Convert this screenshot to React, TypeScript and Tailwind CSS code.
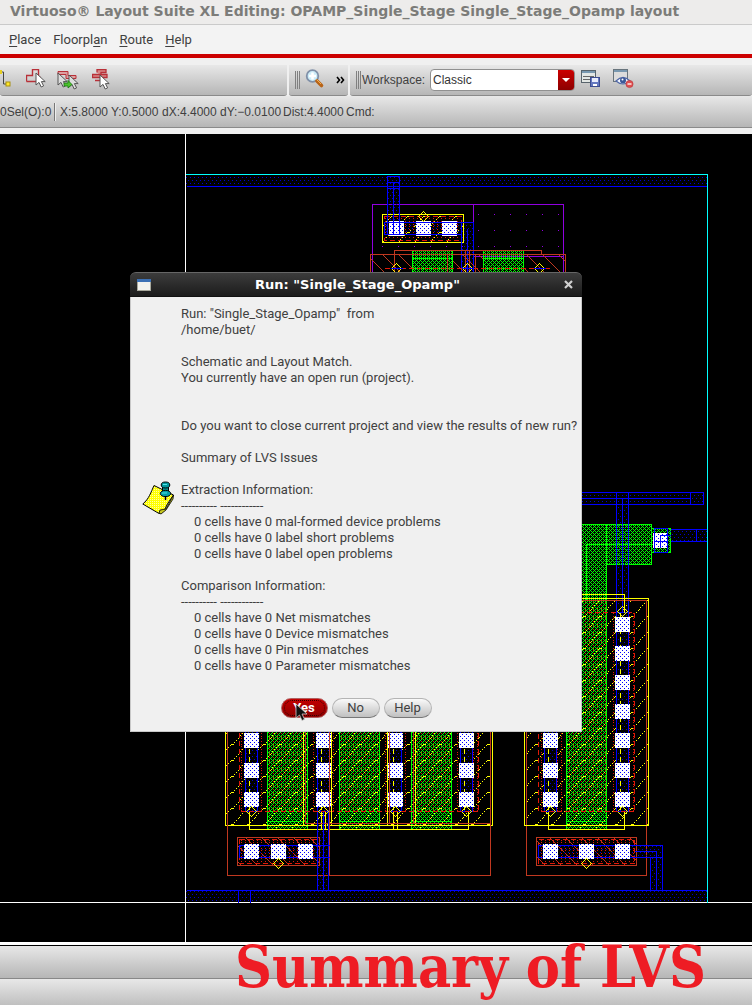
import type { ReactNode } from "react";

const CURSOR = "M0 0V12L3 9.4L5.2 14L7.6 12.9L5.4 8.6H9.2Z";

function Cursor({ x, y, fill = "#fff", stroke = "#555" }: { x: number; y: number; fill?: string; stroke?: string }) {
  return <path d={CURSOR} transform={`translate(${x} ${y})`} fill={fill} stroke={stroke} strokeWidth="1" />;
}

function IconButton({ label, className, width, children }: { label: string; className: string; width: number; children: ReactNode }) {
  return (
    <button type="button" aria-label={label} className={`block shrink-0 ${className}`}>
      <svg width={width} height="22" viewBox={`0 0 ${width} 22`} aria-hidden="true">
        {children}
      </svg>
    </button>
  );
}

function Grip() {
  return (
    <span aria-hidden="true" className="flex h-[18px] shrink-0 gap-px">
      <i className="w-px bg-[#808080]" />
      <i className="w-px bg-[#808080]" />
      <i className="w-px bg-[#808080]" />
    </span>
  );
}

function MenuItem({ before = "", mnemonic, after }: { before?: string; mnemonic: string; after: string }) {
  return (
    <button type="button">
      {before}
      <u className="underline-offset-2">{mnemonic}</u>
      {after}
    </button>
  );
}

function Toolbar() {
  const segment =
    "flex h-[31px] items-center rounded-b-[3px] border-b border-[#8a8a8a] bg-linear-to-b from-[#e8e8e8] to-[#b6b6b6]";
  return (
    <div className="flex gap-[2px] bg-[#f0f0f0] pt-[7px]">
      <div className={`${segment} w-[287px] shrink-0`}>
        <IconButton label="Create wire" className="mr-[15px]" width={11}>
          <path d="M0 3H3.500V15H7" fill="none" stroke="#444" />
          <rect x="0" y="1" width="2" height="4" fill="#e8d020" />
          <rect x="6" y="13" width="4" height="4" fill="#ffe82a" stroke="#a89010" />
        </IconButton>
        <IconButton label="Select shape" className="mr-[10px]" width={21}>
          <path d="M0.500 12.500V6.500H6.500V0.500H12.500V8.500H15M0.500 12.500H10" fill="none" stroke="#b83038" strokeWidth="1.400" />
          <Cursor x={10} y={4} />
        </IconButton>
        <IconButton label="Extend selection" className="mr-[12px]" width={23}>
          <path d="M1 2.500H11V6.500H19V9.500H9V5.500H1Z" fill="#dca0a0" stroke="#b83038" />
          <Cursor x={1} y={4} fill="#ddd" />
          <Cursor x={12} y={6} fill="#ddd" />
          <path d="M7 14H11V11.500L15 15.500L11 19V17H7Z" fill="#4cc22c" stroke="#187810" strokeWidth="0.800" />
        </IconButton>
        <IconButton label="Select by net" className="" width={22}>
          <path d="M5 3.500V0.500H14V3.500H9V6.500M0.500 5.500H15V8.500H0.500ZM3 11.500H9" fill="#d88888" stroke="#b83038" strokeWidth="1.300" />
          <Cursor x={8} y={6} />
        </IconButton>
      </div>
      <div className={`${segment} w-[59px] shrink-0 pl-[6px]`}>
        <Grip />
        <IconButton label="Zoom" className="ml-[5px]" width={20}>
          <circle cx="7.500" cy="7" r="5.800" fill="#ccecf8" stroke="#8090a8" strokeWidth="1.800" />
          <path d="M7.500 3.500V10.500M4 7H11" stroke="#fff" strokeWidth="2.500" />
          <path d="M12 12L16.500 16.500" stroke="#b86418" strokeWidth="3.600" strokeLinecap="round" />
          <path d="M11.500 10.500L16 15" stroke="#f8b050" />
        </IconButton>
        <button type="button" aria-label="More tools" className="ml-[11px]">
          <svg width="9" height="8" viewBox="0 0 9 8" fill="none" stroke="#000" strokeWidth="1.600" aria-hidden="true">
            <path d="M1 1L3.500 4L1 7M5 1L7.500 4L5 7" />
          </svg>
        </button>
      </div>
      <div className={`${segment} flex-1 pl-[6px]`}>
        <Grip />
        <label htmlFor="workspace" className="ml-px w-[68px] shrink-0">
          Workspace:
        </label>
        <div className="grid h-[22px] w-[145px] shrink-0">
          <select
            id="workspace"
            defaultValue="Classic"
            className="col-start-1 row-start-1 appearance-none rounded-[4px] border border-[#909090] bg-white pl-[2px] text-[#333]"
          >
            <option>Classic</option>
            <option>Basic</option>
          </select>
          <span
            aria-hidden="true"
            className="pointer-events-none col-start-1 row-start-1 my-px mr-px flex w-4 items-center justify-center justify-self-end rounded-r-[3px] bg-linear-to-b from-[#cc0000] to-[#8c0000]"
          >
            <svg width="8" height="4" viewBox="0 0 8 4">
              <path d="M0 0H8L4 4Z" fill="#fff" />
            </svg>
          </span>
        </div>
        <IconButton label="Save workspace" className="ml-[6px]" width={20}>
          <rect x="0.500" y="1.500" width="14" height="12" fill="#e2e6e4" stroke="#58646c" />
          <rect x="1" y="2" width="13" height="2" fill="#7898b0" />
          <path d="M2 7.500H13M2 10.500H9" stroke="#666" />
          <rect x="9.500" y="8.500" width="9" height="9" fill="#6478c0" stroke="#3c4c90" />
          <rect x="11" y="9" width="6" height="4" fill="#e8ecfc" />
          <rect x="12" y="15" width="4" height="2" fill="#fff" />
        </IconButton>
        <IconButton label="Hide workspace" className="ml-[12px]" width={22}>
          <rect x="0.500" y="0.500" width="14" height="12" fill="#dcdcdc" stroke="#68747c" />
          <rect x="1" y="1" width="13" height="2" fill="#7898b0" />
          <path d="M3 12Q10 5 17 12Q10 18 3 12Z" fill="#f4f8ff" stroke="#5068a8" strokeWidth="1.200" />
          <circle cx="10" cy="11.500" r="3" fill="#3c5898" />
          <circle cx="9.500" cy="10.500" r="1" fill="#fff" />
          <circle cx="16.500" cy="15" r="3.600" fill="#e05050" stroke="#b83038" strokeWidth="0.600" />
          <path d="M14.500 15H18.500" stroke="#fff" strokeWidth="1.300" />
        </IconButton>
      </div>
    </div>
  );
}

function StatusBar() {
  return (
    <div className="flex h-[32px] items-center border-b border-[#8a8a8a] bg-linear-to-b from-[#e8e8e8] to-[#b6b6b6] whitespace-nowrap">
      <span className="w-[54px] shrink-0">0Sel(O):0</span>
      <i aria-hidden="true" className="mr-1 h-[18px] w-[2px] shrink-0 border-l border-[#777] bg-[#eee]" />
      <span className="w-[51px] shrink-0">X:5.8000</span>
      <span className="w-[51px] shrink-0">Y:0.5000</span>
      <span className="w-[58px] shrink-0">dX:4.4000</span>
      <span className="w-[63px] shrink-0">dY:−0.0100</span>
      <span className="w-[63px] shrink-0">Dist:4.4000</span>
      <span>Cmd:</span>
    </div>
  );
}

/* ---------- Layout drawing ---------- */

function box(x1: number, y1: number, x2: number, y2: number) {
  return `M${x1} ${y1}H${x2}V${y2}H${x1}Z`;
}

/* Outlines are shifted by half a pixel; fills are shifted back onto the pixel grid. */
const ON_GRID = "translate(-0.5 -0.5)";

function Fill({ b, p }: { b: [number, number, number, number]; p: string }) {
  return <rect x={b[0]} y={b[1]} width={b[2] - b[0]} height={b[3] - b[1]} fill={`url(#${p})`} transform={ON_GRID} />;
}

function Contact({ x, y }: { x: number; y: number }) {
  return (
    <g transform={ON_GRID}>
      <rect x={x} y={y} width="15" height="15" fill="#fff" />
      <rect x={x} y={y} width="15" height="15" fill="url(#contact)" />
    </g>
  );
}

function Pin({ x, y }: { x: number; y: number }) {
  return <path d={`M${x} ${y - 5}L${x + 5} ${y}L${x} ${y + 5}L${x - 5} ${y}Z`} stroke="#ffff00" />;
}

const ROWS_LOW = [733, 763, 792];
const ROWS_ALL = [617, 646, 675, 704, 733, 763, 792];

function ContactColumn({ x, rows, top }: { x: number; rows: number[]; top: number }) {
  return (
    <g>
      <Fill b={[x - 4, top, x + 20, 811]} p="diffusion" />
      <rect x={x + 1} y={top} width="12" height={811 - top} fill="#000" />
      <Fill b={[x + 1, top, x + 13, 811]} p="metal" />
      <path d={`M${x + 5} ${top}V811`} stroke="#ffff00" strokeDasharray="5 3" />
      <path d={`M${x + 1} ${top}V811M${x + 13} ${top}V811M${x + 1} 811H${x + 13}`} stroke="#0000ff" />
      {rows.map((y) => (
        <Contact key={y} x={x} y={y} />
      ))}
      <Pin x={x + 7} y={811} />
    </g>
  );
}

function Gate({ x1, x2, y1, y2 }: { x1: number; x2: number; y1: number; y2: number }) {
  return (
    <g>
      <Fill b={[x1, y1, x2, y2]} p="poly" />
      <Fill b={[x1, y1, x2, Math.min(y2, 811)]} p="diffusion" />
      <Fill b={[x1, y1, x2, y2]} p="implant" />
      <path d={`M${x1} ${y1}V${y2}M${x2} ${y1}V${y2}M${x1} 811H${x2}M${x1} 821H${x2}`} stroke="#00ff00" />
    </g>
  );
}

function LayoutCanvas() {
  return (
    <svg width="752" height="808" viewBox="0 134 752 808" shapeRendering="crispEdges" className="block" role="img" aria-label="Single stage op-amp layout">
      <defs>
        <pattern id="contact" width="4" height="4" patternUnits="userSpaceOnUse">
          <path d="M0 0h1v1h-1zM2 2h1v1h-1z" fill="#0000ff" />
        </pattern>
        <pattern id="metal" width="4" height="6" patternUnits="userSpaceOnUse">
          <path d="M0 0h1v1h-1zM2 3h1v1h-1z" fill="#0000d0" />
        </pattern>
        <pattern id="poly" width="4" height="4" patternUnits="userSpaceOnUse">
          <path d="M0 0h1v1h-1zM1 1h1v1h-1zM2 2h1v1h-1zM3 3h1v1h-1zM3 1h1v1h-1zM1 3h1v1h-1z" fill="#00ff00" />
        </pattern>
        <pattern id="diffusion" width="4" height="8" patternUnits="userSpaceOnUse">
          <path d="M1 0h1v1h-1zM1 2h1v1h-1zM1 5h1v1h-1z" fill="#e01808" />
        </pattern>
        <pattern id="implant" width="16" height="16" patternUnits="userSpaceOnUse">
          <path
            d="M0 15h1v1h-1zM2 13h1v1h-1zM4 11h1v1h-1zM6 9h1v1h-1zM7 8h1v1h-1zM8 8h2v1h-2zM10 6h1v1h-1zM12 4h1v1h-1zM14 2h1v1h-1zM15 1h1v1h-1z"
            fill="#ffff00"
          />
        </pattern>
        <pattern id="well" width="16" height="16" patternUnits="userSpaceOnUse">
          <path d="M0 0L16 16" stroke="#c03820" />
        </pattern>
        <pattern id="nwell" x="478" y="214" width="16" height="16" patternUnits="userSpaceOnUse">
          <rect width="1" height="1" fill="#9000e0" />
        </pattern>
      </defs>
      <rect y="134" width="752" height="808" fill="#000" />

      <g fill="none" transform="translate(0.500 0.500)">
        <path d="M185 133V942M-1 902H752" stroke="#fff" />

        {/* supply rails */}
        <Fill b={[186, 175, 707, 186]} p="metal" />
        <Fill b={[186, 890, 707, 902]} p="metal" />
        <path d="M186 186H707M186 890H707M238 890V902M250 890V902" stroke="#0000ff" />
        <path d="M185 174H707V902" stroke="#00ffff" />

        {/* well tap */}
        <path d="M372 272V204H563V272M473 204V256M473 256H563" stroke="#9000e0" />
        <Fill b={[474, 206, 563, 254]} p="nwell" />
        <Fill b={[382, 243, 474, 250]} p="nwell" />
        <Fill b={[384, 216, 461, 240]} p="diffusion" />
        <Fill b={[382, 214, 463, 242]} p="implant" />
        <Fill b={[387, 176, 399, 234]} p="metal" />
        <Fill b={[384, 222, 473, 234]} p="metal" />
        <Fill b={[461, 222, 473, 272]} p="metal" />
        <path d={box(384, 216, 461, 240)} stroke="#e01808" strokeDasharray="5 3" />
        <path d={box(382, 214, 463, 242)} stroke="#ffff00" />
        <Contact x={389} y={221} />
        <Contact x={416} y={221} />
        <Contact x={442} y={221} />
        <path d="M387 234V176H399V234M393 182V234M387 182H399M387 188H399M384 234V222H473V272M384 234H461V272M461 222V234M467 228V272" stroke="#0000ff" />
        <Pin x={423} y={216} />

        {/* upper device row */}
        <Fill b={[370, 254, 565, 272]} p="well" />
        <Fill b={[412, 250, 452, 272]} p="poly" />
        <Fill b={[483, 250, 523, 272]} p="poly" />
        <path d={box(412, 250, 452, 278) + box(483, 250, 523, 278) + "M412 258H452M412 268H452M483 258H523M483 268H523"} stroke="#00ff00" />
        <path d="M370 272V254H565V272M394 272V250H541V254M447 254V272M475 254V272M465 250V272M469 250V272" stroke="#c03820" />
        <path d="M384 268H551" stroke="#e01808" strokeDasharray="5 3" />
        <Pin x={396} y={268} />
        <Pin x={467} y={268} />
        <Pin x={539} y={268} />
        <path d="M390 268H402M461 268H473M533 268H545" stroke="#0000ff" />

        {/* output routing */}
        <Fill b={[520, 524, 651, 564]} p="poly" />
        <Fill b={[566, 564, 606, 600]} p="poly" />
        <Fill b={[651, 528, 670, 552]} p="poly" />
        <path d="M520 524H651V564H606M606 524V600M586 600V544H651M651 528H670V552H651" stroke="#00ff00" />
        <Fill b={[500, 492, 703, 504]} p="metal" />
        <Fill b={[670, 529, 707, 541]} p="metal" />
        <Contact x={653} y={533} />
        <path d="M500 492H703V504H500M500 498H690M690 492V504M654 528H667V552H654ZM660 547V535H670M654 541H667M670 529H706M670 541H706M696 529V541" stroke="#0000ff" />

        {/* right-hand transistor */}
        <Fill b={[524, 598, 648, 825]} p="implant" />
        <Gate x1={566} x2={606} y1={598} y2={829} />
        <ContactColumn x={543} rows={ROWS_ALL} top={612} />
        <ContactColumn x={615} rows={ROWS_ALL} top={612} />
        <path d={box(538, 612, 634, 811)} stroke="#e01808" strokeDasharray="5 3" />
        <Fill b={[616, 504, 628, 612]} p="metal" />
        <path d="M616 492V612M628 492V612M622 498V612M616 612H628" stroke="#0000ff" />
        <Pin x={622} y={611} />
        <path d={box(526, 600, 646, 875)} stroke="#c03820" />
        <path d={box(524, 598, 648, 825) + "M548 811V829H624V811M548 612V594H624V612"} stroke="#ffff00" />

        {/* left-hand transistor array */}
        <Fill b={[225, 700, 492, 825]} p="implant" />
        <Gate x1={267} x2={307} y1={700} y2={829} />
        <Gate x1={339} x2={379} y1={700} y2={829} />
        <Gate x1={411} x2={451} y1={700} y2={829} />
        <ContactColumn x={244} rows={ROWS_LOW} top={700} />
        <ContactColumn x={316} rows={ROWS_LOW} top={700} />
        <ContactColumn x={388} rows={ROWS_LOW} top={700} />
        <ContactColumn x={459} rows={ROWS_LOW} top={700} />
        <path d="M239 700V811H478V700" stroke="#e01808" strokeDasharray="5 3" />
        <path d="M225 700V825H492V700M249 811V829H468V811M303 700V825M331 700V825M321 811V829M325 811V829M387 700V825M393 811V829M397 811V829M415 700V825" stroke="#ffff00" />
        <path d="M227 700V875H490V700M305 700V823H490M329 700V875M389 700V823M413 700V823" stroke="#c03820" />

        {/* substrate taps */}
        <Fill b={[237, 837, 319, 865]} p="well" />
        <Fill b={[239, 839, 317, 863]} p="diffusion" />
        <Fill b={[239, 845, 329, 857]} p="metal" />
        <Fill b={[317, 815, 329, 890]} p="metal" />
        <path d={box(237, 837, 319, 865)} stroke="#c03820" />
        <path d={box(239, 839, 317, 863)} stroke="#e01808" strokeDasharray="5 3" />
        <path d="M239 857V845H329M239 857H329M317 811V890M323 811V890M328 811V890" stroke="#0000ff" />
        <Contact x={244} y={844} />
        <Contact x={271} y={844} />
        <Contact x={298} y={844} />
        <Pin x={278} y={863} />

        <Fill b={[536, 837, 636, 865]} p="well" />
        <Fill b={[538, 839, 634, 863]} p="diffusion" />
        <Fill b={[538, 845, 662, 857]} p="metal" />
        <Fill b={[650, 857, 662, 890]} p="metal" />
        <path d={box(536, 837, 636, 865)} stroke="#c03820" />
        <path d={box(538, 839, 634, 863)} stroke="#e01808" strokeDasharray="5 3" />
        <path d="M538 857V845H662V890M538 857H662M650 857V890M634 851H656V890" stroke="#0000ff" />
        <Contact x={543} y={844} />
        <Contact x={579} y={844} />
        <Contact x={615} y={844} />
        <Pin x={586} y={863} />
      </g>
    </svg>
  );
}

/* ---------- Dialog ---------- */

const MESSAGE = `Run: "Single_Stage_Opamp"  from
/home/buet/

Schematic and Layout Match.
You currently have an open run (project).


Do you want to close current project and view the results of new run?

Summary of LVS Issues

Extraction Information:
---------- ------------
    0 cells have 0 mal-formed device problems
    0 cells have 0 label short problems
    0 cells have 0 label open problems

Comparison Information:
---------- ------------
    0 cells have 0 Net mismatches
    0 cells have 0 Device mismatches
    0 cells have 0 Pin mismatches
    0 cells have 0 Parameter mismatches`;

function NoteIcon() {
  return (
    <svg width="33" height="34" viewBox="0 0 33 34" aria-hidden="true" className="mt-4 shrink-0">
      <defs>
        <pattern id="paper" width="2" height="2" patternUnits="userSpaceOnUse">
          <rect width="2" height="2" fill="#ffff00" />
          <path d="M0 0h1v1h-1z" fill="#ffffa0" />
        </pattern>
      </defs>
      <path d="M12 4.500L31.500 14C28 19 25 23 23.500 27C22 30 20 32 17 32.500L0.800 23C7 18 9 11 12 4.500Z" fill="url(#paper)" stroke="#000" />
      <path d="M17 32L18 29L24 28L31.500 14L31 18L24 29L19 33Z" fill="#c8c820" stroke="#000" strokeWidth="0.800" />
      <rect x="20.500" y="5" width="6" height="7" fill="#009090" stroke="#000" />
      <ellipse cx="23.500" cy="12.500" rx="5.200" ry="3.200" fill="#00a0a8" stroke="#000" />
      <ellipse cx="23.500" cy="4" rx="4.300" ry="3" fill="#00989c" stroke="#000" />
      <path d="M21 3.500H25M20 12H25" stroke="#50e0e8" />
      <path d="M23.500 15V19" stroke="#000" strokeWidth="1.500" />
    </svg>
  );
}

function Dialog() {
  const grey =
    "h-[20px] w-[48px] rounded-full border border-[#b4b4b4] border-b-[#777] bg-linear-to-b from-[#fafafa] to-[#c0c0c0]";
  return (
    <div role="dialog" aria-labelledby="dialog-title" className="absolute top-[138px] left-[130px] w-[452px] text-[13px]">
      <div className="flex h-[25px] items-center rounded-t-[6px] border-t border-[#666] border-b border-b-[#111] bg-linear-to-b from-[#3c3c3c] to-[#1c1c1c] px-[7px]">
        <svg width="14" height="12" viewBox="0 0 14 12" aria-hidden="true">
          <rect width="14" height="12" fill="#a8a89c" />
          <rect x="1" y="3" width="12" height="8" fill="#f2f2ee" />
          <rect width="14" height="3" fill="#3c70b4" />
        </svg>
        <h2
          id="dialog-title"
          className="flex-1 text-center font-['DejaVu_Sans',sans-serif] text-[13px] leading-5 font-bold text-white"
        >
          Run: "Single_Stage_Opamp"
        </h2>
        <button type="button" aria-label="Close" className="mr-[2px]">
          <svg width="9" height="9" viewBox="0 0 9 9" aria-hidden="true">
            <path d="M1 1L8 8M8 1L1 8" stroke="#d0d0d0" strokeWidth="2.200" />
          </svg>
        </button>
      </div>
      <div className="border border-t-0 border-[#c8c8c8] bg-[#f0f0f0] px-[11px] pt-[9px] pb-[13px] font-[Roboto,sans-serif] text-[#404040]">
        <div className="flex items-center gap-[6px]">
          <NoteIcon />
          <p className="leading-4 whitespace-pre">{MESSAGE}</p>
        </div>
        <div className="mt-6 flex items-center justify-center gap-1">
          <div className="relative">
            <button
              type="button"
              className="flex h-[20px] w-[47px] items-center justify-center rounded-full border border-[#b06060] bg-linear-to-b from-[#c40000] to-[#900000] font-bold text-white"
            >
              <span className="w-[41px] rounded-full border border-dotted border-[#300] leading-[14px]">Yes</span>
            </button>
            <svg width="13" height="18" viewBox="-1 -1 13 18" aria-hidden="true" className="pointer-events-none absolute top-[5px] left-[14px]">
              <path d="M0 0V14L3.500 11L6 16.500L8.500 15.300L6 10H11Z" fill="#111" stroke="#ccc" strokeWidth="0.800" />
            </svg>
          </div>
          <button type="button" className={grey}>
            <span className="block leading-4">No</span>
          </button>
          <button type="button" className={grey}>
            <span className="block leading-4">Help</span>
          </button>
        </div>
      </div>
    </div>
  );
}

export default function App() {
  return (
    <div className="min-h-screen overflow-hidden bg-[#f0f0f0] font-['Liberation_Sans',Arial,sans-serif] text-[12px] text-[#404040]">
      <header>
        <h1 className="h-[25px] overflow-hidden border-b border-[#cacaca] bg-[#edeceb] pl-[10px] font-['DejaVu_Sans',sans-serif] text-[14px] leading-[23px] font-bold whitespace-nowrap text-[#7c7c79]">
          Virtuoso® Layout Suite XL Editing: OPAMP_Single_Stage Single_Stage_Opamp layout
        </h1>
        <nav className="flex h-[33px] items-center gap-3 border-b-4 border-[#cc0000] bg-[#f3f3f3] pl-[9px] font-[Roboto,sans-serif] text-[13px]">
          <MenuItem mnemonic="P" after="lace" />
          <MenuItem before="Floorpl" mnemonic="a" after="n" />
          <MenuItem mnemonic="R" after="oute" />
          <MenuItem mnemonic="H" after="elp" />
        </nav>
        <Toolbar />
        <StatusBar />
      </header>
      <main className="relative mt-[6px] overflow-hidden bg-black">
        <LayoutCanvas />
        <Dialog />
      </main>
      <footer className="relative border-t-[3px] border-white">
        <div className="h-[34px] border-t border-b border-t-black border-b-[#888] bg-linear-to-b from-[#e8e8e8] to-[#b6b6b6]" />
        <div className="h-[26px] bg-linear-to-b from-[#e8e8e8] to-[#c0c0c0]" />
        <p className="absolute -top-[9px] left-[235px] font-['DejaVu_Serif_Condensed','Liberation_Serif',serif] text-[57px] leading-[62px] font-bold whitespace-nowrap text-[#ee1c24]">
          Summary of LVS
        </p>
      </footer>
    </div>
  );
}
